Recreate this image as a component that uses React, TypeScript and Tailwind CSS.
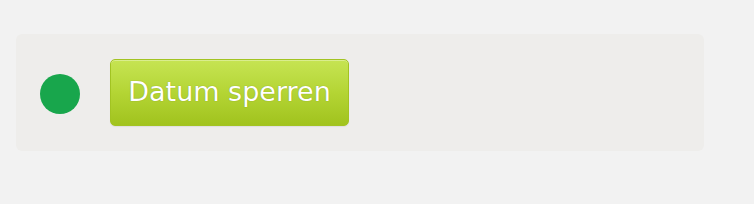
export default function App() {
  return (
    <div className="min-h-[204px] w-full bg-[#f2f2f2] pt-[34px] pl-4 pr-[50px]">
      <div className="flex h-[117px] items-center gap-[30px] rounded-md bg-[#eeedeb] pl-6 pb-px">
        <div className="mt-[3px] h-10 w-10 shrink-0 rounded-full bg-[#18a64c]" />
        <button
          type="button"
          className="flex h-[67px] w-[239px] items-center justify-center rounded-[5px] border border-[#a2c322] bg-gradient-to-b from-[#c6e452] via-[#b4d534] to-[#a1c31d] pb-[2px] font-['DejaVu_Sans',Verdana,sans-serif] text-[27px] leading-none text-white shadow-[inset_0_1px_0_rgba(255,255,255,0.35),0_1px_1px_rgba(0,0,0,0.06)] [text-shadow:0_0_1px_rgba(80,100,0,0.6)]"
        >
          Datum sperren
        </button>
      </div>
    </div>
  );
}
